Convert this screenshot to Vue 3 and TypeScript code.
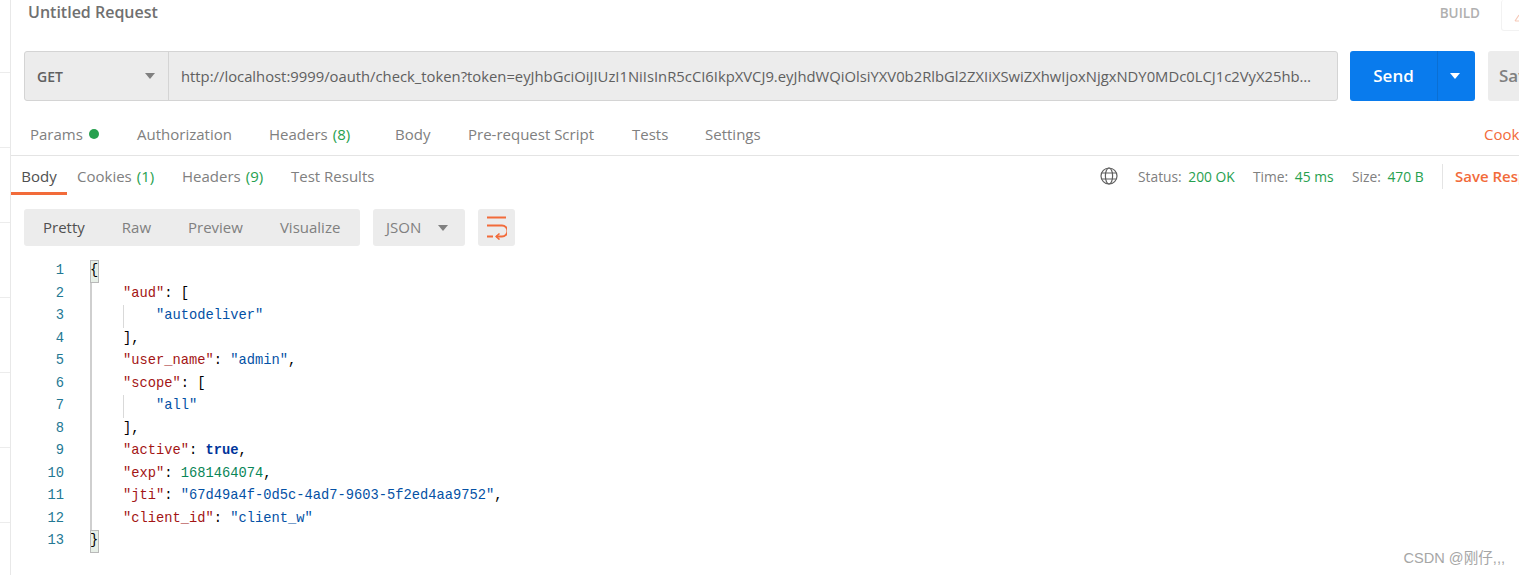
<script setup lang="ts">
interface Token { t: string; c: string }
interface Line { indent: number; tokens: Token[]; match?: boolean }

const k = (t: string): Token => ({ t, c: 'key' })
const s = (t: string): Token => ({ t, c: 'str' })
const p = (t: string): Token => ({ t, c: 'pun' })

const lines: Line[] = [
  { indent: 0, tokens: [p('{')], match: true },
  { indent: 1, tokens: [k('"aud"'), p(': [')] },
  { indent: 2, tokens: [s('"autodeliver"')] },
  { indent: 1, tokens: [p('],')] },
  { indent: 1, tokens: [k('"user_name"'), p(': '), s('"admin"'), p(',')] },
  { indent: 1, tokens: [k('"scope"'), p(': [')] },
  { indent: 2, tokens: [s('"all"')] },
  { indent: 1, tokens: [p('],')] },
  { indent: 1, tokens: [k('"active"'), p(': '), { t: 'true', c: 'bool' }, p(',')] },
  { indent: 1, tokens: [k('"exp"'), p(': '), { t: '1681464074', c: 'num' }, p(',')] },
  { indent: 1, tokens: [k('"jti"'), p(': '), s('"67d49a4f-0d5c-4ad7-9603-5f2ed4aa9752"'), p(',')] },
  { indent: 1, tokens: [k('"client_id"'), p(': '), s('"client_w"')] },
  { indent: 0, tokens: [p('}')], match: true },
]

const url =
  'http://localhost:9999/oauth/check_token?token=eyJhbGciOiJIUzI1NiIsInR5cCI6IkpXVCJ9.eyJhdWQiOlsiYXV0b2RlbGl2ZXIiXSwiZXhwIjoxNjgxNDY0MDc0LCJ1c2VyX25hbWUiOiJhZG1pbiIsImp0aSI6IjY3ZDQ5YTRmIn0'

const sideRows = 8
</script>

<template>
  <div class="app">
    <aside class="side">
      <div v-for="n in sideRows" :key="n" class="side-row"></div>
    </aside>
    <main class="main">
      <header class="head">
        <span class="title">Untitled Request</span>
        <span class="build">BUILD</span>
        <span class="comment-box">
          <svg width="12" height="12" viewBox="0 0 12 12"><path d="M1 9 L5 3 M1 9 H5" fill="none" stroke="#f6c9b8" stroke-width="1.2" /></svg>
        </span>
      </header>

      <div class="url-row">
        <div class="url-box">
          <div class="method">
            <span>GET</span>
            <i class="caret grey"></i>
          </div>
          <div class="url-text">{{ url }}</div>
        </div>
        <div class="send">
          <span class="send-label">Send</span>
          <span class="send-more"><i class="caret white"></i></span>
        </div>
        <div class="save">Save</div>
      </div>

      <nav class="req-tabs">
        <span class="tab first">Params <i class="dot"></i></span>
        <span class="tab w-auth">Authorization</span>
        <span class="tab w-head">Headers <b class="count">(8)</b></span>
        <span class="tab w-body">Body</span>
        <span class="tab w-pre">Pre-request Script</span>
        <span class="tab w-tests">Tests</span>
        <span class="tab">Settings</span>
        <span class="cookies">Cookies</span>
      </nav>

      <div class="res-bar">
        <span class="res-tab active">Body</span>
        <span class="res-tab t-cookies">Cookies <b class="count">(1)</b></span>
        <span class="res-tab t-headers">Headers <b class="count">(9)</b></span>
        <span class="res-tab t-tests">Test Results</span>
        <div class="stats">
          <svg class="globe" width="18" height="18" viewBox="0 0 18 18" fill="none" stroke="#5f5f5f" stroke-width="1.2">
            <circle cx="9" cy="9" r="8" />
            <ellipse cx="9" cy="9" rx="3.6" ry="8" />
            <path d="M1.6 6h14.8M1.6 12h14.8" />
          </svg>
          <span class="stat s1">Status: <em>200 OK</em></span>
          <span class="stat s2">Time: <em>45 ms</em></span>
          <span class="stat s3">Size: <em>470 B</em></span>
          <span class="save-res">Save Response</span>
        </div>
      </div>

      <div class="toolbar">
        <div class="views">
          <span class="view on">Pretty</span>
          <span class="view">Raw</span>
          <span class="view">Preview</span>
          <span class="view">Visualize</span>
        </div>
        <div class="format">
          <span class="format-label">JSON</span>
          <i class="caret grey"></i>
        </div>
        <div class="wrap">
          <svg width="21" height="24" viewBox="0 0 21 24" fill="none" stroke="#f26b3a" stroke-width="2">
            <path d="M1 1.500h19" />
            <path d="M1 9.500h15a5.500 5.500 0 0 1 0 11H10" />
            <path d="M1 20.500h6" />
            <path d="M13.500 17.500l-3.300 3 3.300 3" stroke-width="1.600" />
          </svg>
        </div>
      </div>

      <section class="code">
        <div v-for="(line, i) in lines" :key="i" class="line">
          <span class="num-col">{{ i + 1 }}</span>
          <span v-for="n in line.indent" :key="n" class="guide" :class="{ strong: n === 1 }"></span>
          <span class="content" :class="{ match: line.match }">
            <span v-for="(tok, j) in line.tokens" :key="j" :class="tok.c">{{ tok.t }}</span>
          </span>
        </div>
      </section>
    </main>
    <div class="mark">CSDN @刚仔,,,</div>
  </div>
</template>

<style>
html, body { margin: 0; background: #fff; overflow: hidden; }
</style>

<style scoped>
.app {
  position: relative;
  display: flex;
  width: 1519px;
  height: 575px;
  overflow: hidden;
  background: #fff;
  font-family: "Open Sans", "Noto Sans", sans-serif;
  font-size: 15px;
  color: #808080;
}
.side {
  flex: 0 0 10px;
  border-right: 1px solid #e8e8e8;
  margin-top: -2px;
}
.side-row { height: 74px; border-bottom: 1px solid #ececec; }
.main { flex: 0 0 1508px; min-width: 0; }
.head {
  display: flex;
  align-items: flex-start;
  height: 51px;
  box-sizing: border-box;
  padding-left: 17px;
}
.title { font-weight: 600; font-size: 16px; line-height: 24px; color: #707070; }
.build { margin-left: auto; margin-top: 4px; font-size: 13.500px; line-height: 18px; font-weight: 600; color: #b0b0b0; margin-right: 21px; }
.comment-box {
  flex: 0 0 30px;
  height: 31px;
  margin-right: -12px;
  box-sizing: border-box;
  border: 1px solid #f2f2f2;
  border-top: 0;
  border-radius: 3px;
  padding: 8px 0 0 12px;
}
.url-row { display: flex; height: 50px; padding-left: 13px; }
.url-box {
  display: flex;
  flex: 0 0 1314px;
  min-width: 0;
  box-sizing: border-box;
  background: #ececec;
  border: 1px solid #d4d4d4;
  border-radius: 3px;
}
.method {
  flex: 0 0 144px;
  box-sizing: border-box;
  display: flex;
  align-items: center;
  justify-content: space-between;
  padding: 0 13px 0 12px;
  border-right: 1px solid #d4d4d4;
  font-weight: 600;
  font-size: 14px;
  color: #606060;
}
.url-text {
  flex: 1;
  min-width: 0;
  padding: 0 14px 0 12px;
  line-height: 48px;
  font-size: 14.800px;
  color: #606060;
  white-space: nowrap;
  overflow: hidden;
  text-overflow: ellipsis;
}
.caret {
  display: block;
  width: 0;
  height: 0;
  border-left: 5px solid transparent;
  border-right: 5px solid transparent;
  border-top: 6px solid #808080;
}
.caret.white { border-top-color: #fff; }
.send {
  flex: 0 0 125px;
  display: flex;
  margin-left: 12px;
  background: #097bed;
  border-radius: 3px;
  color: #fff;
  font-weight: 600;
  font-size: 17px;
}
.send-label { flex: 0 0 87px; text-align: center; line-height: 50px; }
.send-more {
  flex: 1;
  display: flex;
  align-items: center;
  justify-content: center;
  padding-right: 3px;
  border-left: 1px solid #0a6fd4;
}
.save {
  flex: 0 0 80px;
  margin-left: 13px;
  padding-left: 11px;
  box-sizing: border-box;
  background: #ececec;
  border-radius: 3px;
  color: #808080;
  font-weight: 600;
  font-size: 17px;
  line-height: 50px;
}
.req-tabs {
  position: relative;
  display: flex;
  height: 55px;
  box-sizing: border-box;
  padding: 22px 0 0 19px;
  line-height: 22px;
  border-bottom: 1px solid #e4e4e4;
  white-space: nowrap;
}
.tab { display: inline-flex; align-items: center; height: 22px; }
.first { width: 107px; }
.w-auth { width: 132px; }
.w-head { width: 126px; }
.w-body { width: 73px; }
.w-pre { width: 164px; }
.w-tests { width: 73px; }
.dot { display: block; width: 10px; height: 10px; margin-left: 6px; border-radius: 50%; background: #26a04e; }
.count { font-weight: 400; color: #26a04e; margin-left: 5px; }
.cookies { position: absolute; left: 1473px; top: 22px; color: #f26b3a; }
.res-bar {
  display: flex;
  align-items: flex-start;
  height: 39px;
  white-space: nowrap;
  line-height: 20px;
  padding-top: 10px;
  box-sizing: border-box;
}
.res-tab { position: relative; display: inline-flex; align-items: center; }
.active { width: 56px; justify-content: center; color: #505050; }
.active::after {
  content: "";
  position: absolute;
  left: 0;
  right: 0;
  top: 26px;
  height: 3px;
  background: #f26b3a;
}
.t-cookies { margin-left: 10px; width: 105px; }
.t-headers { width: 109px; }
.t-tests { width: 100px; }
.stats { display: flex; align-items: center; height: 20px; margin-left: auto; font-size: 13.800px; }
.globe { margin-right: 20px; }
.stat { padding-top: 2px; }
.stat em { font-style: normal; color: #26a04e; margin-left: 3px; }
.s1 { width: 115px; }
.s2 { width: 99px; }
.s3 { width: 90px; }
.save-res {
  width: 64px;
  overflow: hidden;
  padding-left: 12px;
  border-left: 1px solid #e4e4e4;
  font-weight: 600;
  font-size: 15px;
  line-height: 25px;
  color: #f26b3a;
}
.toolbar { display: flex; height: 37px; margin-top: 14px; padding-left: 13px; }
.views {
  display: flex;
  flex: 0 0 336px;
  gap: 37px;
  box-sizing: border-box;
  padding-left: 19px;
  background: #ececec;
  border-radius: 3px;
  line-height: 37px;
}
.view.on { color: #505050; }
.format {
  flex: 0 0 92px;
  box-sizing: border-box;
  display: flex;
  align-items: center;
  justify-content: space-between;
  margin-left: 13px;
  padding: 0 17px 0 13px;
  background: #ececec;
  border-radius: 3px;
}
.format-label { padding-bottom: 2px; }
.wrap {
  flex: 0 0 37px;
  display: flex;
  align-items: center;
  justify-content: center;
  margin-left: 13px;
  background: #ececec;
  border-radius: 3px;
}
.code {
  margin-top: 14px;
  font-family: "Liberation Mono", "DejaVu Sans Mono", monospace;
  font-size: 13.75px;
  line-height: 22.5px;
  color: #000;
}
.line { display: flex; height: 22.5px; white-space: pre; }
.num-col {
  flex: 0 0 53px;
  text-align: right;
  margin-right: 26px;
  color: #237893;
}
.guide { flex: 0 0 33px; box-sizing: border-box; border-left: 1px solid #d9d9d9; }
.guide.strong { border-left: 2px solid #cfcfcf; }
.match { outline: 1px solid #b9b9b9; outline-offset: -1px; background: #e7efe7; width: 9px; }
.key { color: #a31515; }
.str { color: #0451a5; }
.num { color: #098658; }
.bool { color: #00349b; font-weight: 700; }
.pun { color: #000; }
.mark {
  position: absolute;
  right: 14px;
  bottom: 8px;
  font-family: "Liberation Sans", "Noto Sans CJK SC", sans-serif;
  font-size: 14.600px;
  line-height: 18px;
  color: #a6a6a6;
}
</style>
